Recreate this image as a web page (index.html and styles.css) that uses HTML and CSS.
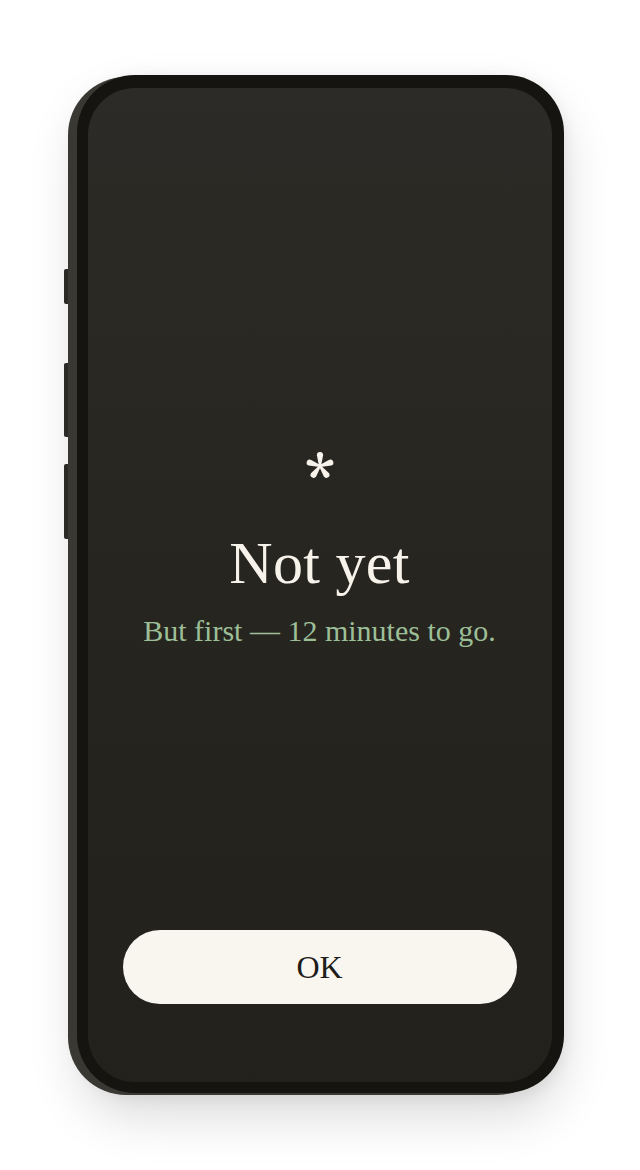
FILE: index.html
```html
<!DOCTYPE html>
<html lang="en">
<head>
<meta charset="utf-8">
<title>Not yet</title>
<link rel="stylesheet" href="styles.css">
</head>
<body>
<div class="stage">
  <div class="phone">
    <span class="side-btn btn-a"></span>
    <span class="side-btn btn-b"></span>
    <span class="side-btn btn-c"></span>
    <div class="screen">
      <main class="content">
        <svg class="mark" width="30" height="30" viewBox="-15 -15 30 30" aria-hidden="true">
          <g fill="#f7f3ea">
            <path d="M -1 0 L -3.1 -10.8 A 3.1 3.1 0 0 1 3.1 -10.8 L 1 0 Z"/>
            <path d="M -1 0 L -3.1 -10.8 A 3.1 3.1 0 0 1 3.1 -10.8 L 1 0 Z" transform="rotate(72)"/>
            <path d="M -1 0 L -3.1 -10.8 A 3.1 3.1 0 0 1 3.1 -10.8 L 1 0 Z" transform="rotate(144)"/>
            <path d="M -1 0 L -3.1 -10.8 A 3.1 3.1 0 0 1 3.1 -10.8 L 1 0 Z" transform="rotate(216)"/>
            <path d="M -1 0 L -3.1 -10.8 A 3.1 3.1 0 0 1 3.1 -10.8 L 1 0 Z" transform="rotate(288)"/>
            <circle cx="0" cy="0" r="2.2"/>
          </g>
        </svg>
        <h1 class="title">Not yet</h1>
        <p class="subtitle">But first — 12 minutes to go.</p>
      </main>
      <button class="ok" type="button">OK</button>
    </div>
  </div>
</div>
</body>
</html>
```

FILE: styles.css
```css
html, body {
  margin: 0;
  padding: 0;
  background: #ffffff;
}
body {
  width: 640px;
  height: 1170px;
  overflow: hidden;
  font-family: "Liberation Serif", "DejaVu Serif", serif;
}
.stage {
  display: flex;
  justify-content: center;
  padding-top: 75px;
}
.phone {
  position: relative;
  width: 487px;
  height: 1018px;
  box-sizing: border-box;
  padding: 13px 12px 11px 11px;
  border-radius: 58px;
  background: #151410;
  box-shadow: -9px 2px 0 0 #3a3833, 0 24px 50px rgba(0, 0, 0, 0.14), 0 4px 16px rgba(0, 0, 0, 0.08);
}
.side-btn {
  position: absolute;
  left: -13px;
  width: 4px;
  border-radius: 2px 0 0 2px;
  background: #2b2a26;
}
.btn-a { top: 194px; height: 35px; }
.btn-b { top: 288px; height: 74px; }
.btn-c { top: 389px; height: 75px; }
.screen {
  height: 100%;
  box-sizing: border-box;
  border-radius: 47px;
  background: linear-gradient(180deg, #2c2b27 0%, #262520 50%, #22211c 100%);
  display: flex;
  flex-direction: column;
  padding: 0 35px 78px;
}
.content {
  flex: 1;
  display: flex;
  flex-direction: column;
  align-items: center;
  justify-content: flex-start;
  padding-top: 363px;
  text-align: center;
}
.mark {
  display: block;
  flex: none;
}
.title {
  margin: 49px 0 0;
  font-weight: 400;
  font-size: 60px;
  line-height: 66px;
  color: #f7f3ea;
  letter-spacing: 0.3px;
}
.subtitle {
  margin: 17px 0 0;
  font-size: 30px;
  line-height: 36px;
  color: #9dbf98;
}
.ok {
  display: block;
  width: 100%;
  height: 74px;
  border: 0;
  border-radius: 37px;
  background: #f9f6ef;
  color: #1e1d19;
  font-family: "Liberation Serif", "DejaVu Serif", serif;
  font-size: 32px;
  padding: 0;
  cursor: pointer;
}
```
